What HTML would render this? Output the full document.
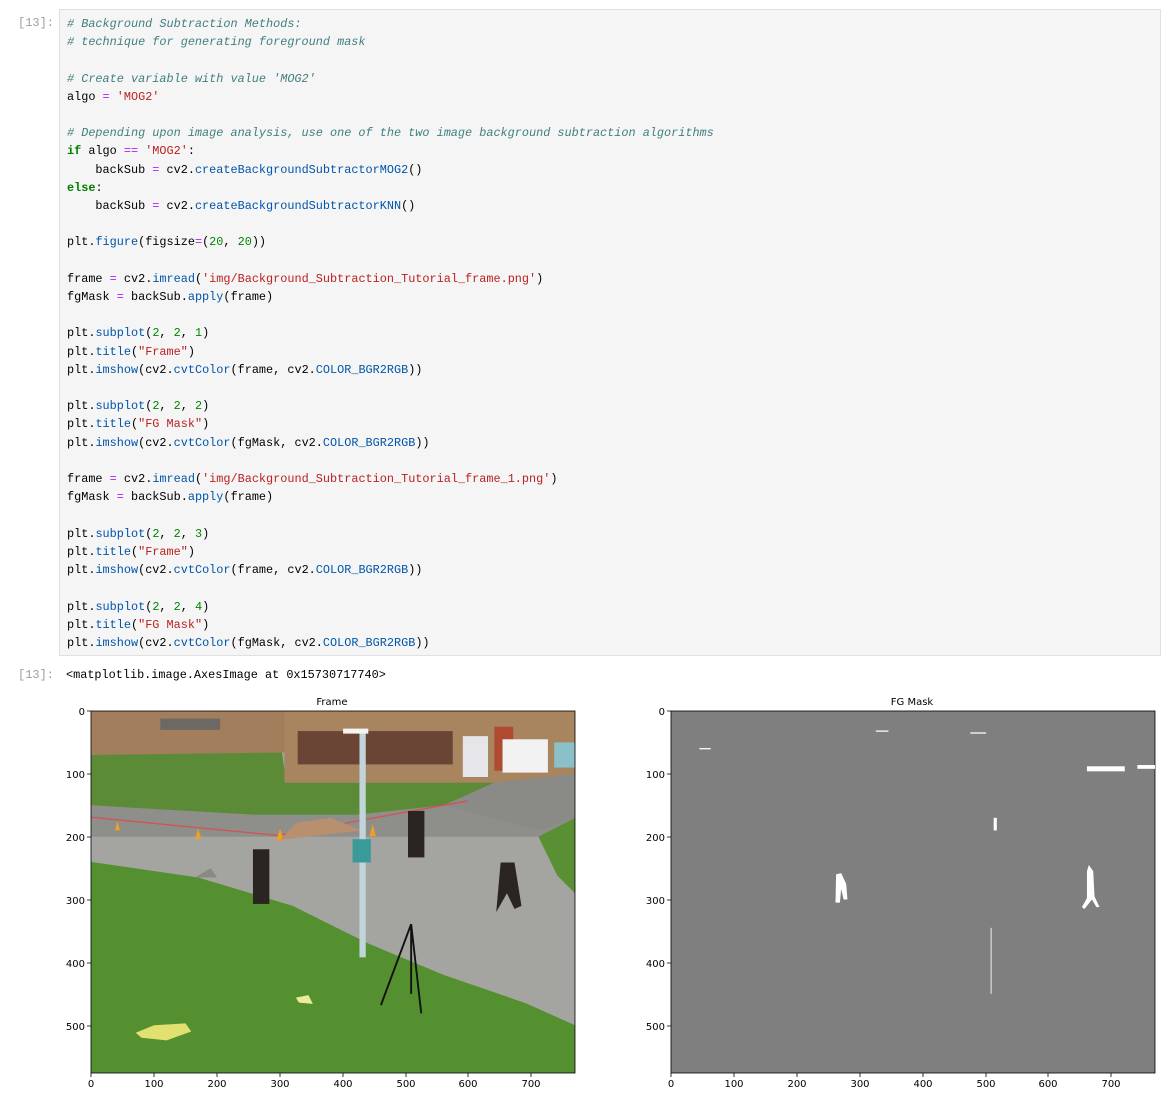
<!DOCTYPE html>
<html><head><meta charset="utf-8"><style>
body{margin:0;background:#fff;width:1169px;height:1116px;position:relative;overflow:hidden;font-family:"Liberation Mono",monospace;}
.prompt{position:absolute;left:18px;color:#9e9e9e;font-size:12px;}
.cell{position:absolute;left:59px;top:9px;width:1100px;height:645px;background:#f5f5f5;border:1px solid #e0e0e0;}
pre{margin:0;position:absolute;left:7px;top:5px;font-family:"Liberation Mono",monospace;font-size:11.85px;line-height:18.2px;color:#000;}
.c{color:#408080;font-style:italic}.s{color:#ba2121}.k{color:#008000;font-weight:bold}.o{color:#aa22ff}.f{color:#0055aa}.n{color:#008800}
.out{position:absolute;left:66px;top:668px;font-size:11.85px;}
svg text{font-family:"DejaVu Sans",sans-serif;font-size:10px;fill:#000}
</style></head><body>
<div class="prompt" style="top:16px">[13]:</div>
<div class="cell"><pre><span class="c"># Background Subtraction Methods:</span>
<span class="c"># technique for generating foreground mask</span>

<span class="c"># Create variable with value 'MOG2'</span>
algo <span class="o">=</span> <span class="s">'MOG2'</span>

<span class="c"># Depending upon image analysis, use one of the two image background subtraction algorithms</span>
<span class="k">if</span> algo <span class="o">==</span> <span class="s">'MOG2'</span>:
    backSub <span class="o">=</span> cv2.<span class="f">createBackgroundSubtractorMOG2</span>()
<span class="k">else</span>:
    backSub <span class="o">=</span> cv2.<span class="f">createBackgroundSubtractorKNN</span>()

plt.<span class="f">figure</span>(figsize<span class="o">=</span>(<span class="n">20</span>, <span class="n">20</span>))

frame <span class="o">=</span> cv2.<span class="f">imread</span>(<span class="s">'img/Background_Subtraction_Tutorial_frame.png'</span>)
fgMask <span class="o">=</span> backSub.<span class="f">apply</span>(frame)

plt.<span class="f">subplot</span>(<span class="n">2</span>, <span class="n">2</span>, <span class="n">1</span>)
plt.<span class="f">title</span>(<span class="s">"Frame"</span>)
plt.<span class="f">imshow</span>(cv2.<span class="f">cvtColor</span>(frame, cv2.<span class="f">COLOR_BGR2RGB</span>))

plt.<span class="f">subplot</span>(<span class="n">2</span>, <span class="n">2</span>, <span class="n">2</span>)
plt.<span class="f">title</span>(<span class="s">"FG Mask"</span>)
plt.<span class="f">imshow</span>(cv2.<span class="f">cvtColor</span>(fgMask, cv2.<span class="f">COLOR_BGR2RGB</span>))

frame <span class="o">=</span> cv2.<span class="f">imread</span>(<span class="s">'img/Background_Subtraction_Tutorial_frame_1.png'</span>)
fgMask <span class="o">=</span> backSub.<span class="f">apply</span>(frame)

plt.<span class="f">subplot</span>(<span class="n">2</span>, <span class="n">2</span>, <span class="n">3</span>)
plt.<span class="f">title</span>(<span class="s">"Frame"</span>)
plt.<span class="f">imshow</span>(cv2.<span class="f">cvtColor</span>(frame, cv2.<span class="f">COLOR_BGR2RGB</span>))

plt.<span class="f">subplot</span>(<span class="n">2</span>, <span class="n">2</span>, <span class="n">4</span>)
plt.<span class="f">title</span>(<span class="s">"FG Mask"</span>)
plt.<span class="f">imshow</span>(cv2.<span class="f">cvtColor</span>(fgMask, cv2.<span class="f">COLOR_BGR2RGB</span>))</pre></div>
<div class="prompt" style="top:668px">[13]:</div>
<div class="out">&lt;matplotlib.image.AxesImage at 0x15730717740&gt;</div>

<svg width="1169" height="1116" style="position:absolute;left:0;top:0" xmlns="http://www.w3.org/2000/svg">
<svg x="91" y="711" width="484" height="362" viewBox="0 0 768 576" preserveAspectRatio="none">
<rect width="768" height="576" fill="#a4a4a0"/>
<polygon points="0,140 300,140 480,120 768,80 768,200 0,200" fill="#8e8e8a"/>
<polygon points="0,70 300,45 310,114 640,114 560,150 420,165 260,165 0,150" fill="#5b8b36"/>
<polygon points="0,0 307,0 307,66 0,70" fill="#a27e5c"/>
<rect x="110" y="12" width="95" height="18" fill="#6c6864"/>
<rect x="307" y="0" width="461" height="114" fill="#a8845f"/>
<rect x="328" y="32" width="246" height="53" fill="#6a4434"/>
<rect x="590" y="40" width="40" height="65" fill="#e6e6ea"/>
<rect x="640" y="25" width="30" height="70" fill="#b04a30"/>
<rect x="653" y="45" width="72" height="53" fill="#f2f2f2"/>
<rect x="735" y="50" width="33" height="40" fill="#8cc0c8"/>
<polygon points="560,150 640,114 768,100 768,170 710,190" fill="#8a8a86"/>
<polygon points="0,240 170,265 320,310 440,370 560,420 690,465 768,500 768,576 0,576" fill="#54902f"/>
<polygon points="710,200 768,170 768,290 740,262" fill="#5b8f33"/>
<polyline points="0,169 296,198 598,143" fill="none" stroke="#d85050" stroke-width="2"/>
<g fill="#f0a020"><polygon points="38,190 46,190 42,175"/><polygon points="165,203 175,203 170,187"/><polygon points="294,206 306,206 300,187"/><polygon points="442,199 452,199 447,180"/></g>
<polygon points="326,178 380,170 430,190 300,205" fill="#b89070"/>
<rect x="426" y="32" width="10" height="360" fill="#c0d4da"/>
<rect x="400" y="28" width="40" height="8" fill="#f4f4f0"/>
<rect x="415" y="204" width="29" height="37" fill="#3a9a98"/>
<rect x="257" y="220" width="26" height="87" fill="#2a2422"/>
<rect x="503" y="159" width="26" height="74" fill="#2a2422"/>
<polygon points="650,241 672,241 683,310 672,315 660,290 643,320" fill="#2a2422"/>
<path d="M508 339 L460 468 M508 339 L508 450 M508 339 L524 481" stroke="#111" stroke-width="3"/>
<polygon points="71,512 100,500 150,497 159,510 120,524 80,520" fill="#e2e070"/>
<polygon points="325,456 345,452 352,466 330,464" fill="#eceb9a"/>
<polygon points="165,265 190,250 200,265" fill="#8c8a80"/>
</svg>
<rect x="91" y="711" width="484" height="362" fill="none" stroke="#000" stroke-width="0.8"/>
<text x="332" y="705" text-anchor="middle">Frame</text>
<rect x="671" y="711" width="484" height="362" fill="#7f7f7f" stroke="#000" stroke-width="0.8"/>
<svg x="671" y="711" width="484" height="362" viewBox="0 0 768 576" preserveAspectRatio="none" fill="#fff">
<rect x="45" y="59" width="18" height="2"/><rect x="325" y="31" width="20" height="2"/><rect x="475" y="34" width="25" height="2"/>
<rect x="660" y="88" width="60" height="8"/><rect x="740" y="86" width="28" height="6"/>
<rect x="512" y="170" width="5" height="20"/>
<polygon points="262,260 270,258 278,275 280,300 274,300 270,283 268,305 261,305"/>
<polygon points="663,245 670,255 672,295 680,312 675,312 668,300 656,315 652,312 660,298 660,255"/>
<rect x="507" y="345" width="2" height="105" opacity="0.7"/>
</svg>
<text x="912" y="705" text-anchor="middle">FG Mask</text>
<g stroke="#000" stroke-width="0.8">
<path d="M91 1073v4M154 1073v4M217 1073v4M280 1073v4M343 1073v4M406 1073v4M468 1073v4M531 1073v4"/>
<path d="M91 711h-4M91 774h-4M91 837h-4M91 900h-4M91 963h-4M91 1026h-4"/>
<path d="M671 1073v4M734 1073v4M797 1073v4M860 1073v4M923 1073v4M986 1073v4M1048 1073v4M1111 1073v4"/>
<path d="M671 711h-4M671 774h-4M671 837h-4M671 900h-4M671 963h-4M671 1026h-4"/>
</g>
<g text-anchor="middle">
<text x="91" y="1087">0</text><text x="154" y="1087">100</text><text x="217" y="1087">200</text><text x="280" y="1087">300</text><text x="343" y="1087">400</text><text x="406" y="1087">500</text><text x="468" y="1087">600</text><text x="531" y="1087">700</text>
<text x="671" y="1087">0</text><text x="734" y="1087">100</text><text x="797" y="1087">200</text><text x="860" y="1087">300</text><text x="923" y="1087">400</text><text x="986" y="1087">500</text><text x="1048" y="1087">600</text><text x="1111" y="1087">700</text>
</g>
<g text-anchor="end">
<text x="85" y="715">0</text><text x="85" y="778">100</text><text x="85" y="841">200</text><text x="85" y="904">300</text><text x="85" y="967">400</text><text x="85" y="1030">500</text>
<text x="665" y="715">0</text><text x="665" y="778">100</text><text x="665" y="841">200</text><text x="665" y="904">300</text><text x="665" y="967">400</text><text x="665" y="1030">500</text>
</g>
</svg>
</body></html>
